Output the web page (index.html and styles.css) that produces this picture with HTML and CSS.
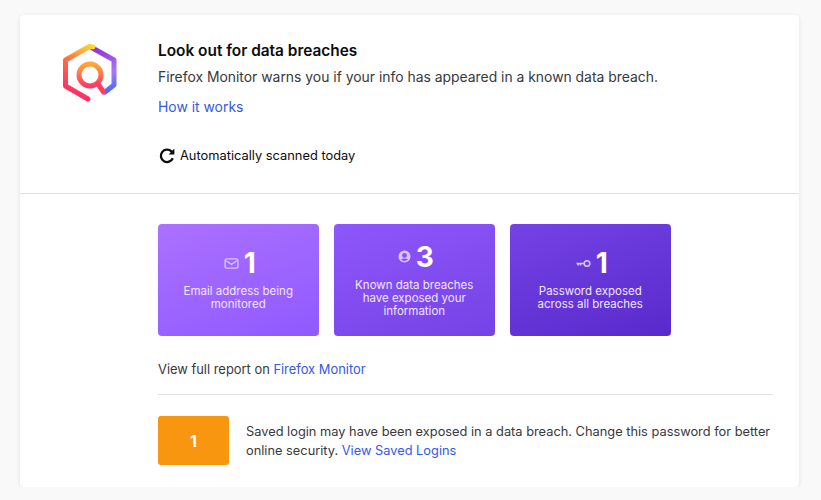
FILE: index.html
```html
<!DOCTYPE html>
<html lang="en">
<head>
  <meta charset="UTF-8">
  <title>Firefox Monitor</title>
  <link rel="stylesheet" href="styles.css">
</head>
<body>

  <div class="card">
    <div class="top">
      <svg class="logo" width="60" height="60" viewBox="0 0 60 60" fill="none" stroke-width="5" stroke-linecap="round" stroke-linejoin="round">
        <defs>
          <linearGradient id="gradLeft" gradientUnits="userSpaceOnUse" x1="10" y1="52" x2="32" y2="4">
            <stop offset="0" stop-color="#ff2a6a"/>
            <stop offset="0.55" stop-color="#ff6a45"/>
            <stop offset="1" stop-color="#ffd52e"/>
          </linearGradient>
          <linearGradient id="gradRight" gradientUnits="userSpaceOnUse" x1="34" y1="5" x2="50" y2="52">
            <stop offset="0" stop-color="#8f2fd0"/>
            <stop offset="0.6" stop-color="#a877ff"/>
            <stop offset="1" stop-color="#3f6af0"/>
          </linearGradient>
          <linearGradient id="gradLens" x1="0.5" y1="0" x2="0.5" y2="1">
            <stop offset="0" stop-color="#ffa838"/>
            <stop offset="1" stop-color="#ff3a68"/>
          </linearGradient>
        </defs>
        <path d="M31.5 5.5 L54 18 V43 L45 50" stroke="url(#gradRight)"/>
        <path d="M28 57 L5.5 44 V18 L29.5 4.5 L33 5" stroke="url(#gradLeft)"/>
        <circle cx="30" cy="33" r="11" stroke="url(#gradLens)"/>
        <path d="M38 42 L43.5 50" stroke="#ff3f62"/>
      </svg>
      <div class="intro">
        <h2>Look out for data breaches</h2>
        <p class="lead">Firefox Monitor warns you if your info has appeared in a known data breach.</p>
        <a class="link" href="#">How it works</a>
        <div class="scanned">
          <svg width="18" height="18" viewBox="0 0 18 18" fill="none" stroke="#0c0c0d" stroke-width="2.3">
            <path d="M14.8 11.2 A6.2 6.2 0 1 1 13.4 4.4 L15.4 6.4"/>
            <path d="M16.4 1.6 V7.4 H10.6" fill="#0c0c0d" stroke="none"/>
          </svg>
          <span>Automatically scanned today</span>
        </div>
      </div>
    </div>

    <div class="bottom">
      <div class="stats">
        <div class="stat stat-light">
          <div class="stat-head">
            <svg width="15" height="11" viewBox="0 0 16 12" fill="none" stroke="#d9c4ff" stroke-width="1.5">
              <rect x="1" y="1" width="14" height="10" rx="2"/>
              <path d="M2 3 L8 7 L14 3"/>
            </svg>
            <span class="num">1</span>
          </div>
          <p>Email address being monitored</p>
        </div>
        <div class="stat stat-mid">
          <div class="stat-head">
            <svg width="13" height="13" viewBox="0 0 13 13" fill="#d9c4ff">
              <path fill-rule="evenodd" d="M6.5 0.5 a6 6 0 1 0 0 12 a6 6 0 1 0 0 -12 Z M6.5 3 a2.4 2.4 0 1 1 0 4.8 a2.4 2.4 0 1 1 0 -4.8 Z M2.9 9.6 Q6.5 7.2 10.1 9.6 Q6.5 12.4 2.9 9.6 Z"/>
            </svg>
            <span class="num">3</span>
          </div>
          <p>Known data breaches have exposed your information</p>
        </div>
        <div class="stat stat-dark">
          <div class="stat-head">
            <svg width="15" height="9" viewBox="0 0 15 9" fill="none" stroke="#d9c4ff" stroke-width="1.6">
              <circle cx="11" cy="4.5" r="2.8"/>
              <path d="M8 4.5 H0.5 M2 4.5 V6.5 M4.5 4.5 V6.5"/>
            </svg>
            <span class="num">1</span>
          </div>
          <p>Password exposed across all breaches</p>
        </div>
      </div>

      <p class="report">View full report on <a class="link" href="#">Firefox Monitor</a></p>

      <div class="alert">
        <div class="alert-count">1</div>
        <p>Saved login may have been exposed in a data breach. Change this password for better online security. <a class="link" href="#">View Saved Logins</a></p>
      </div>
    </div>
  </div>

</body>
</html>
```

FILE: styles.css
```css
body {
  margin: 0;
  padding: 15px 22px 0 20px;
  background: #f9f9fa;
  font-family: Inter, 'Noto Sans', sans-serif;
  color: #38383d;
}

.card {
  height: 472px;
  background: #fff;
  border-radius: 4px;
  box-shadow: 0 1px 4px rgba(12,12,13,0.1);
  overflow: hidden;
}

.top {
  display: flex;
  height: 178px;
  padding-left: 40px;
  border-bottom: 1px solid #e0e0e2;
}

.logo {
  margin-top: 27px;
  margin-right: 38px;
  flex-shrink: 0;
}

.intro {
  padding-top: 26px;
}

h2 {
  margin: 0;
  font-size: 15.4px;
  line-height: 19px;
  font-weight: 600;
  color: #0c0c0d;
}

.lead {
  margin: 7px 0 0;
  font-size: 13.9px;
  line-height: 20px;
}

.link {
  color: #3558e8;
  text-decoration: none;
}

.intro > .link {
  display: block;
  margin-top: 10px;
  font-size: 13.9px;
  line-height: 20px;
}

.scanned {
  display: flex;
  align-items: center;
  gap: 4px;
  margin-top: 30px;
  font-size: 12.85px;
  line-height: 18px;
  color: #0c0c0d;
}

.bottom {
  padding: 30px 26px 0 138px;
}

.stats {
  display: flex;
  gap: 15.5px;
}

.stat {
  display: flex;
  flex-direction: column;
  align-items: center;
  justify-content: center;
  width: 160.5px;
  height: 112px;
  padding: 0 20px 2px;
  box-sizing: border-box;
  border-radius: 4px;
  color: #fff;
}

.stat p {
  margin: 0;
  font-size: 11.5px;
  line-height: 13px;
  text-align: center;
  color: #f1e8ff;
}

.stat-light {
  background: linear-gradient(160deg, #ab71ff, #9059ff);
}

.stat-mid {
  background: linear-gradient(160deg, #8f57fb, #7542e5);
}

.stat-dark {
  background: linear-gradient(160deg, #7542e5, #592acb);
}

.stat-head {
  display: flex;
  align-items: center;
  justify-content: center;
  gap: 5px;
  margin-bottom: 6px;
  padding-left: 3px;
}

.num {
  font-size: 28px;
  line-height: 32px;
  font-weight: 700;
}

.report {
  margin: 25px 0 0;
  padding-bottom: 15px;
  font-size: 12.9px;
  line-height: 18px;
  border-bottom: 1px solid #e0e0e2;
}

.alert {
  display: flex;
  align-items: center;
  gap: 17px;
  margin-top: 21px;
}

.alert-count {
  display: flex;
  align-items: center;
  justify-content: center;
  flex-shrink: 0;
  width: 71px;
  height: 49px;
  border-radius: 3px;
  background: #f8960f;
  color: #fff;
  font-size: 16px;
  font-weight: 700;
}

.alert p {
  margin: 0;
  font-size: 12.82px;
  line-height: 19px;
}
```
